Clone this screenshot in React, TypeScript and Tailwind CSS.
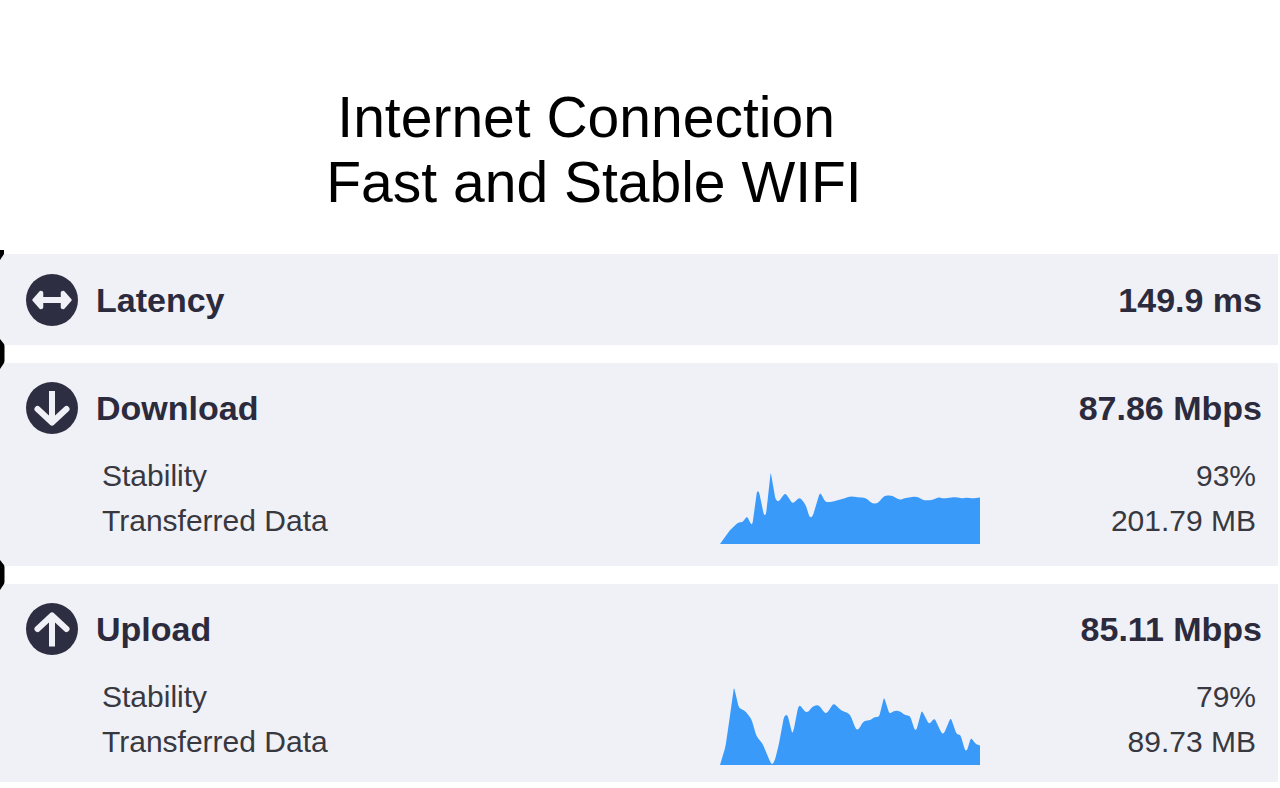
import type { ReactNode } from "react";

type Point = [number, number];

const CHART_WIDTH = 260;
const CHART_HEIGHT = 91;

const DOWNLOAD_POINTS: Point[] = [
  [0, 91], [10, 77], [15, 72.5], [18.5, 69], [22.5, 69.5], [27, 63], [31, 71.5], [32.5, 71],
  [37, 38], [39, 38.5], [44, 62.5], [46, 61.5], [50.7, 19], [55.5, 46.5], [58.5, 49], [64.5, 40.5],
  [66.5, 41.5], [72.7, 51], [78.5, 45], [81, 45.5], [85.7, 52], [89.7, 64.5], [92.5, 64],
  [99.5, 40.5], [101, 40.5], [105.5, 49.5], [113, 48.5], [124, 45.5], [131, 43], [137.5, 44.5],
  [145, 44.5], [152.5, 50.5], [157.5, 50.5], [164.5, 42.5], [172.5, 42.5], [179, 47],
  [187.5, 44.5], [196.5, 43.5], [204.5, 47.5], [212.5, 47], [219, 44], [222.5, 45.5],
  [236.5, 44], [241.5, 45.5], [246.5, 44.5], [253, 45.5], [260, 44.5],
];

const UPLOAD_POINTS: Point[] = [
  [0, 91], [5.5, 72.5], [9.5, 45], [14, 13], [19, 34.5], [24.3, 36], [31.5, 45], [36.5, 62.5],
  [42.5, 69.5], [50, 87.5], [52.3, 91], [55, 86], [59, 69.5], [64, 42.5], [66.5, 40.5],
  [68, 42.5], [72.3, 60], [74, 54.5], [78, 33.5], [80, 31], [85.5, 38.5], [88.5, 37.5],
  [92.5, 32.5], [98.5, 30.5], [105, 39.5], [107.5, 38.5], [113.7, 29], [121.5, 37],
  [127.5, 38.5], [130.5, 41.5], [136, 55.5], [138.5, 55.5], [144, 46.5], [150.5, 46.5],
  [154.5, 42.5], [159, 43.5], [164, 23], [169.5, 40], [173.5, 37], [179, 36.5], [185.5, 41.5],
  [190, 41.5], [194.7, 56], [196.5, 56], [201.5, 37], [203, 38.5], [209, 50.5], [214.5, 44],
  [221.7, 59.5], [224, 59.5], [230.7, 43.5], [236.7, 60.5], [240.5, 60.5], [245, 76.5],
  [247, 76.5], [251, 63.5], [255.5, 70], [260, 71.5],
];

/** Area under the samples, with each corner eased by a short curve. */
function areaPath(points: Point[]): string {
  const toward = ([x, y]: Point, [tx, ty]: Point): string => {
    const distance = Math.hypot(tx - x, ty - y);
    const t = Math.min(0.5, 3 / distance);
    return `${x + (tx - x) * t} ${y + (ty - y) * t}`;
  };
  const curves = points
    .slice(1, -1)
    .map((p, i) => `L${toward(p, points[i])}Q${p[0]} ${p[1]} ${toward(p, points[i + 2])}`)
    .join("");
  const last = points[points.length - 1];
  return `M${points[0].join(" ")}${curves}L${last.join(" ")}V${CHART_HEIGHT}H0Z`;
}

function AreaChart({ points, label }: { points: Point[]; label: string }) {
  return (
    <svg
      className="h-[91px] w-[260px] shrink-0"
      viewBox={`0 0 ${CHART_WIDTH} ${CHART_HEIGHT}`}
      role="img"
      aria-label={label}
    >
      <path d={areaPath(points)} fill="#3a9afa" />
    </svg>
  );
}

function RoundIcon({ children }: { children: ReactNode }) {
  return (
    <svg
      className="size-[52px] shrink-0"
      viewBox="0 0 52 52"
      fill="none"
      stroke="#f0f1f6"
      strokeLinejoin="round"
      aria-hidden="true"
    >
      <circle cx="26" cy="26" r="26" fill="#2e2e42" stroke="none" />
      {children}
    </svg>
  );
}

function LatencyIcon() {
  return (
    <RoundIcon>
      <path d="M14 26H38" strokeWidth="6" />
      <path
        d="M7.500 26L14.500 18L16 18.500V33.500L14.500 34ZM44.500 26L37.500 18L36 18.500V33.500L37.500 34Z"
        fill="#f0f1f6"
        strokeWidth="2.500"
      />
    </RoundIcon>
  );
}

function DownloadIcon() {
  return (
    <RoundIcon>
      <path d="M26 9V39" strokeWidth="6" />
      <path d="M11.500 27L26 40.500L40.500 27" strokeWidth="6" strokeLinecap="round" />
    </RoundIcon>
  );
}

function UploadIcon() {
  return (
    <RoundIcon>
      <path d="M26 43.500V13" strokeWidth="6" />
      <path d="M11.500 26L26 12.500L40.500 26" strokeWidth="6" strokeLinecap="round" />
    </RoundIcon>
  );
}

/** Dark tab at the left edge, above the first card. */
function TopNotch() {
  return (
    <svg className="absolute -top-[5px] left-0 h-3 w-1" viewBox="0 0 4 12" aria-hidden="true">
      <path d="M0 1H4V5L0 11Z" fill="#000" />
    </svg>
  );
}

/** Dark tab at the left edge, across the gap between two cards. */
function GapNotch() {
  return (
    <svg className="absolute -top-[25px] left-0 h-8 w-[5px]" viewBox="0 0 5 32" aria-hidden="true">
      <path d="M0 1L4 6L4.500 8V23L4 25L0 31Z" fill="#000" />
    </svg>
  );
}

interface CardHeaderProps {
  icon: ReactNode;
  title: string;
  value: string;
}

function CardHeader({ icon, title, value }: CardHeaderProps) {
  return (
    <div className="flex items-center justify-between text-[34px] leading-[51px] font-bold text-[#2b2b3d]">
      <h2 className="flex items-center gap-[18px]">
        {icon}
        {title}
      </h2>
      <p>{value}</p>
    </div>
  );
}

interface TransferProps extends CardHeaderProps {
  stability: string;
  transferred: string;
  points: Point[];
}

function TransferDetails({ icon, title, value, stability, transferred, points }: TransferProps) {
  return (
    <>
      <CardHeader icon={icon} title={title} value={value} />
      <div className="mt-[19px] flex items-start pr-1.5 pl-[76px] text-[30px] leading-[45px] text-[#383841]">
        <div className="flex-1">
          <p>Stability</p>
          <p>Transferred Data</p>
        </div>
        <AreaChart points={points} label={title} />
        <div className="w-[276px] text-right">
          <p>{stability}</p>
          <p>{transferred}</p>
        </div>
      </div>
    </>
  );
}

export default function App() {
  return (
    <main className="min-h-screen bg-white pt-[85px] font-['Liberation_Sans',Arial,sans-serif]">
      <h1 className="pr-[92px] text-center text-[57px] leading-[65px] whitespace-pre text-black">
        {"Internet Connection \nFast and Stable WIFI"}
      </h1>
      <div className="mt-[39px] mr-0.5 flex flex-col gap-[18px]">
        <section className="relative bg-[#f0f1f6] pt-5 pr-4 pb-[19px] pl-[26px]">
          <TopNotch />
          <CardHeader icon={<LatencyIcon />} title="Latency" value="149.9 ms" />
        </section>
        <section className="relative bg-[#f0f1f6] pt-[19px] pr-4 pb-[22px] pl-[26px]">
          <GapNotch />
          <TransferDetails
            icon={<DownloadIcon />}
            title="Download"
            value="87.86 Mbps"
            stability="93%"
            transferred="201.79 MB"
            points={DOWNLOAD_POINTS}
          />
        </section>
        <section className="relative bg-[#f0f1f6] pt-[19px] pr-4 pb-[17px] pl-[26px]">
          <GapNotch />
          <TransferDetails
            icon={<UploadIcon />}
            title="Upload"
            value="85.11 Mbps"
            stability="79%"
            transferred="89.73 MB"
            points={UPLOAD_POINTS}
          />
        </section>
      </div>
    </main>
  );
}
